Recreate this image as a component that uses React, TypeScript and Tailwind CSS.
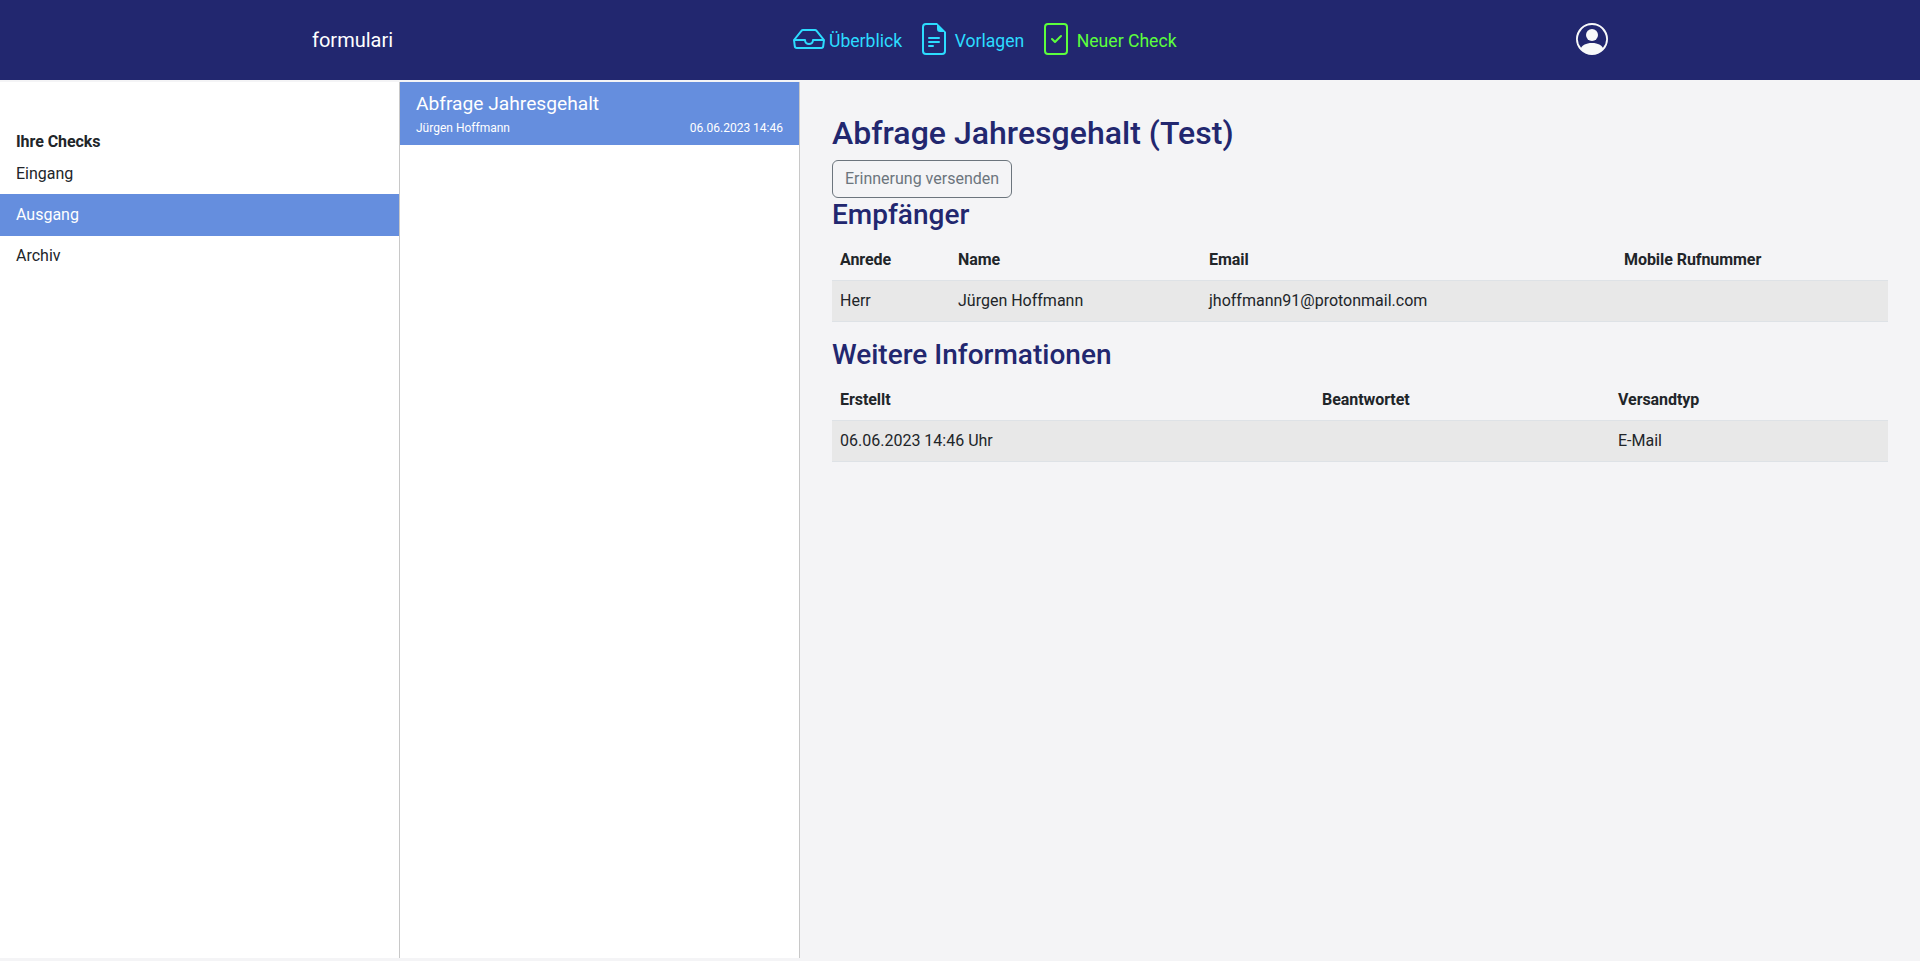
import type { ReactNode } from "react";
import { BsFileCheck, BsFileEarmarkText, BsInbox, BsPersonCircle } from "react-icons/bs";

function NavLink({ icon, label, color }: { icon: ReactNode; label: string; color: string }) {
  return (
    <a className={`flex items-center gap-[4.5px] px-2 text-[17.6px] leading-7 ${color}`}>
      {icon}
      <span className="mt-0.5">{label}</span>
    </a>
  );
}

function InfoTable({ widths, head, row }: { widths: string[]; head: string[]; row: string[] }) {
  return (
    <table className="w-full table-fixed border-collapse text-left text-[#212529]">
      <colgroup>
        {widths.map((w, i) => (
          <col key={i} className={w} />
        ))}
      </colgroup>
      <thead>
        <tr className="border-b border-[#dee2e6]">
          {head.map((h) => (
            <th key={h} className="p-2 font-bold tracking-[-0.06px]">{h}</th>
          ))}
        </tr>
      </thead>
      <tbody>
        <tr className="border-b border-[#dee2e6] bg-[#e8e8e8]">
          {row.map((c, i) => (
            <td key={i} className="p-2">{c}</td>
          ))}
        </tr>
      </tbody>
    </table>
  );
}

export default function App() {
  return (
    <div className="flex h-[961px] flex-col bg-[#f4f4f6] font-['Roboto',sans-serif] text-base font-normal text-[#212529]">
      <header className="flex h-20 shrink-0 items-center bg-[#22276f] px-[312px] text-white">
        <div className="w-[472.5px] text-xl">formulari</div>
        <nav className="flex flex-1">
          <NavLink icon={<BsInbox size={32} className="-mt-0.5" />} label="Überblick" color="text-[#2cdcff]" />
          <NavLink icon={<BsFileEarmarkText size={32} className="-mt-0.5" />} label="Vorlagen" color="text-[#2cdcff]" />
          <NavLink icon={<BsFileCheck size={32} className="-mt-0.5" />} label="Neuer Check" color="text-[#5cff3c]" />
        </nav>
        <BsPersonCircle size={32} className="-mt-0.5 text-[#f8f9fa]" />
      </header>

      <div className="mt-0.5 flex h-[876px]">
        <aside className="w-[400px] border-r border-[#c8c8c8] bg-white pt-12">
          <div className="px-4 font-bold leading-6 tracking-[-0.06px]">Ihre Checks</div>
          <ul>
            <li className="px-4 py-2 leading-6">Eingang</li>
            <li className="bg-[#658ede] px-4 py-[9px] leading-6 text-white">Ausgang</li>
            <li className="px-4 py-2 leading-6">Archiv</li>
          </ul>
        </aside>

        <section className="w-[400px] border-r border-[#c8c8c8] bg-white">
          <div className="h-[63px] bg-[#658ede] px-4 pt-2 text-white">
            <div className="text-[19.2px] leading-7">Abfrage Jahresgehalt</div>
            <div className="flex justify-between text-xs leading-5">
              <span>Jürgen Hoffmann</span>
              <span>06.06.2023 14:46</span>
            </div>
          </div>
        </section>

        <main className="flex-1 px-8 pt-8">
          <h1 className="mb-2 text-[32px] font-medium leading-[38px] tracking-[0.03px] text-[#22276f]">Abfrage Jahresgehalt (Test)</h1>
          <button className="block h-[38px] rounded-md border border-[#6c757d] px-3 leading-6 text-[#6c757d]">
            Erinnerung versenden
          </button>
          <h2 className="mb-2 text-[28px] font-medium leading-[34px] text-[#22276f]">Empfänger</h2>
          <InfoTable
            widths={["w-[118px]", "w-[251px]", "w-[415px]", "w-[272px]"]}
            head={["Anrede", "Name", "Email", "Mobile Rufnummer"]}
            row={["Herr", "Jürgen Hoffmann", "jhoffmann91@protonmail.com", ""]}
          />
          <h2 className="mt-4 mb-2 text-[28px] font-medium leading-[34px] text-[#22276f]">Weitere Informationen</h2>
          <InfoTable
            widths={["w-[482px]", "w-[296px]", "w-[278px]"]}
            head={["Erstellt", "Beantwortet", "Versandtyp"]}
            row={["06.06.2023 14:46 Uhr", "", "E-Mail"]}
          />
        </main>
      </div>
    </div>
  );
}
